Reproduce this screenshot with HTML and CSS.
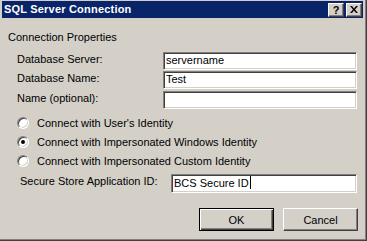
FILE: index.html
```html
<!DOCTYPE html>
<html lang="en">
<head>
    <meta charset="UTF-8">
    <meta name="viewport" content="width=device-width, initial-scale=1.0">
    <title>SQL Server Connection</title>
    <link rel="stylesheet" href="styles.css">
</head>
<body>
    <div class="window">
        <div class="title-bar">
            <span class="title-text">SQL Server Connection</span>
            <div class="caption-buttons">
                <span class="caption-btn help">?</span>
                <span class="caption-btn close">
                    <svg width="8" height="7" viewBox="0 0 8 7">
                        <path d="M0 0h2l2 2.5 2-2.5h2l-3 3.5 3 3.5h-2l-2-2.5-2 2.5h-2l3-3.5z" fill="#000"/>
                    </svg>
                </span>
            </div>
        </div>

        <div class="content">
            <div class="group-label">Connection Properties</div>

            <div class="fields">
                <label>Database Server:</label>
                <div class="textbox">servername</div>
                <label>Database Name:</label>
                <div class="textbox">Test</div>
                <label>Name (optional):</label>
                <div class="textbox"></div>
            </div>

            <div class="radios">
                <div class="radio-row"><span class="radio"></span>Connect with User's Identity</div>
                <div class="radio-row"><span class="radio checked"></span>Connect with Impersonated Windows Identity</div>
                <div class="radio-row"><span class="radio"></span>Connect with Impersonated Custom Identity</div>
            </div>

            <div class="secure-row">
                <label>Secure Store Application ID:</label>
                <div class="textbox wide">BCS Secure ID<span class="caret"></span></div>
            </div>

            <div class="buttons">
                <button class="btn default">OK</button>
                <button class="btn">Cancel</button>
            </div>
        </div>
    </div>
</body>
</html>
```

FILE: styles.css
```css
body {
    margin: 0;
    padding: 0;
    background-color: #d4d0c8;
    font-family: "Liberation Sans", Arial, sans-serif;
    font-size: 11px;
    color: #000;
    overflow: hidden;
}

.window {
    box-sizing: border-box;
    width: 367px;
    height: 241px;
    padding: 1px 3px 0 2px;
    border-right: 1px solid #404040;
    border-bottom: 1px solid #404040;
    box-shadow: inset -1px -1px #808080;
}

.title-bar {
    display: flex;
    align-items: center;
    justify-content: space-between;
    height: 17px;
    padding: 0 1px 0 2px;
    background-color: #0a246a;
}

.title-text {
    color: #fff;
    font-weight: bold;
    font-size: 11px;
    line-height: 17px;
    letter-spacing: 0.2px;
}

.caption-buttons {
    display: flex;
    gap: 2px;
    margin-top: 1px;
}

.caption-btn {
    box-sizing: border-box;
    width: 16px;
    height: 14px;
    display: flex;
    align-items: center;
    justify-content: center;
    background-color: #d4d0c8;
    border: 1px solid;
    border-color: #fff #404040 #404040 #fff;
    box-shadow: inset -1px -1px #808080;
}

.help {
    font-weight: bold;
    font-size: 11px;
    line-height: 12px;
    padding-bottom: 1px;
}

.close svg {
    display: block;
    margin-bottom: 1px;
}

.content {
    padding: 0 6px;
}

.group-label {
    margin-top: 13px;
    line-height: 13px;
}

.fields {
    display: grid;
    grid-template-columns: 146px 194px;
    grid-auto-rows: 18px;
    row-gap: 1.5px;
    margin-top: 7.5px;
    padding-left: 9px;
}

.fields label {
    line-height: 15px;
}

.textbox {
    box-sizing: border-box;
    height: 18px;
    padding: 0 2px;
    background-color: #fff;
    border: 1px solid;
    border-color: #808080 #fff #fff #808080;
    box-shadow: inset 1px 1px #404040, inset -1px -1px #d4d0c8;
    line-height: 15px;
    white-space: nowrap;
}

.radios {
    margin-top: 5px;
    padding-left: 9px;
}

.radio-row {
    display: flex;
    align-items: center;
    height: 19px;
    line-height: 19px;
}

.radio {
    box-sizing: border-box;
    width: 12px;
    height: 12px;
    margin-right: 8px;
    border-radius: 50%;
    background-color: #fff;
    border: 1px solid;
    border-color: #808080 #fff #fff #808080;
    box-shadow: inset 1px 1px #404040, inset -1px -1px #d4d0c8;
    display: flex;
    align-items: center;
    justify-content: center;
}

.radio.checked::after {
    content: "";
    width: 4px;
    height: 4px;
    border-radius: 50%;
    background-color: #000;
}

.secure-row {
    display: flex;
    align-items: flex-start;
    margin-top: 3.5px;
    padding-left: 12px;
}

.secure-row label {
    width: 151px;
    line-height: 13px;
    margin-top: -2px;
    padding-top: 3px;
}

.textbox.wide {
    width: 186px;
    height: 19px;
    line-height: 16px;
}

.caret {
    display: inline-block;
    width: 1px;
    height: 13px;
    margin-left: 1px;
    vertical-align: -2px;
    background-color: #000;
}

.buttons {
    display: flex;
    justify-content: flex-end;
    gap: 9px;
    margin-top: 15px;
    margin-right: -1px;
}

.btn {
    box-sizing: border-box;
    width: 75px;
    height: 23px;
    padding: 0;
    font-family: "Liberation Sans", Arial, sans-serif;
    font-size: 11px;
    color: #000;
    background-color: #d4d0c8;
    border: 1px solid;
    border-color: #fff #404040 #404040 #fff;
    box-shadow: inset -1px -1px #808080;
}

.btn.default {
    border: 1px solid #000;
    box-shadow: inset 1px 1px #fff, inset -1px -1px #404040, inset -2px -2px #808080;
}
```
